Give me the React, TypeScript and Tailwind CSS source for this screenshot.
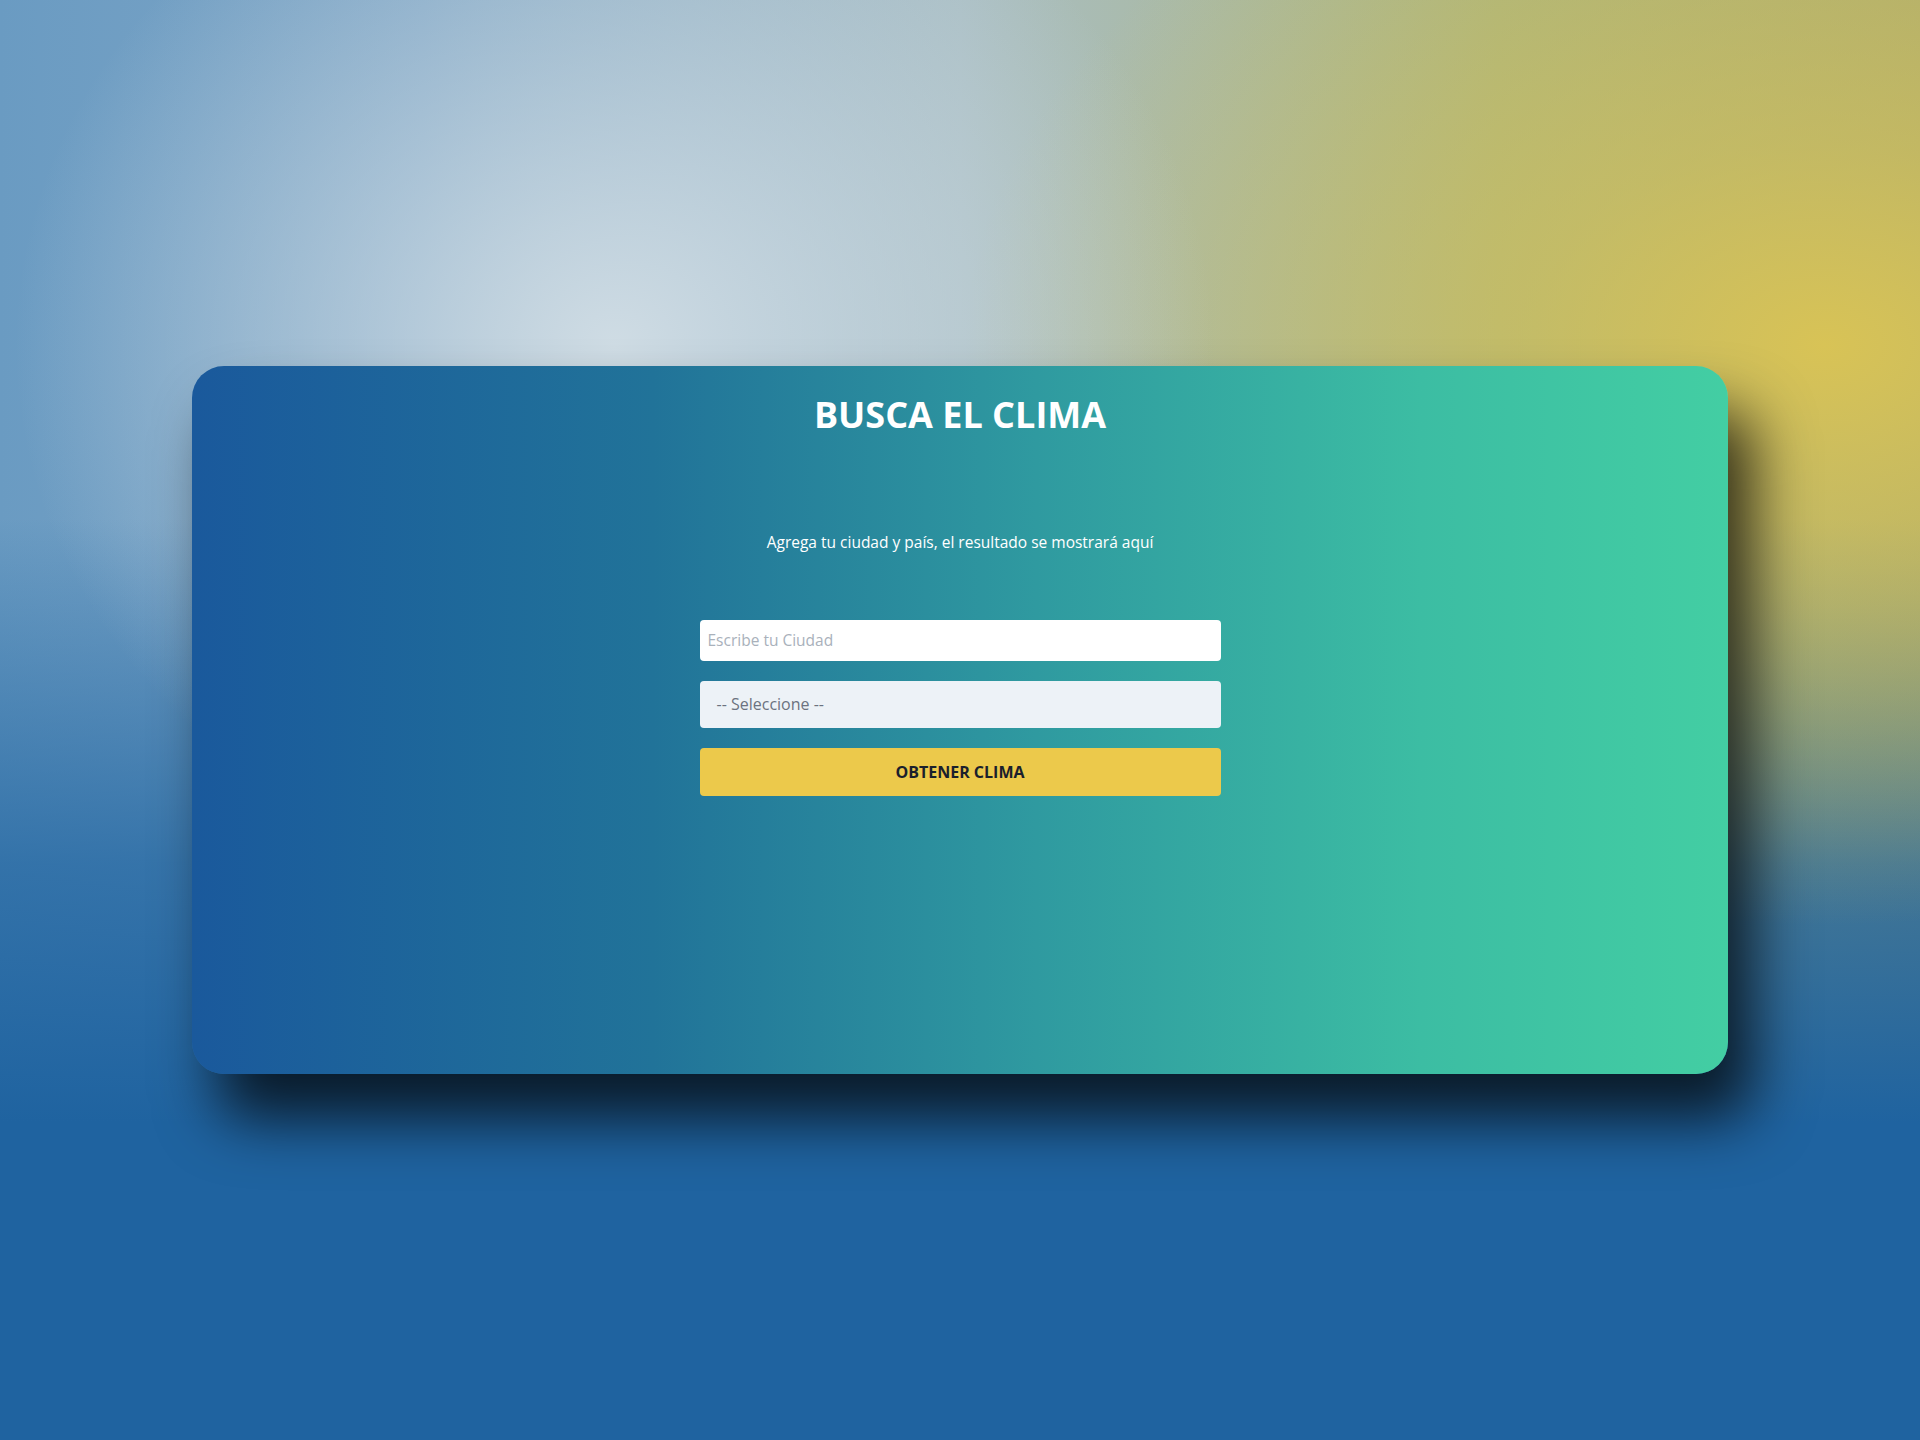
import React from "react";

export default function App() {
  return (
    <div
      className="w-[1920px] h-[1440px] flex items-center justify-center overflow-hidden bg-[radial-gradient(600px_540px_at_32%_24%,#cfdce4_0%,rgba(207,220,228,0.6)_40%,rgba(207,220,228,0)_100%),radial-gradient(860px_580px_at_95%_24%,#d8c356_0%,rgba(216,195,86,0.55)_35%,rgba(216,195,86,0)_100%),linear-gradient(180deg,rgba(31,99,160,0)_0%,rgba(31,99,160,0)_36%,rgba(33,101,161,0.75)_60%,#1f63a0_78%,#1f63a0_100%),linear-gradient(90deg,#6a9bc2_0%,#7fa6c6_22%,#a9bec4_50%,#aab47e_78%,#a9ab72_100%)]"
      style={{ fontFamily: '"Open Sans", "Noto Sans", sans-serif' }}
    >
      <div className="w-[1536px] h-[708px] rounded-[32px] bg-[linear-gradient(90deg,#1a599c_0%,#217399_30%,#2f9aa0_55%,#3cbda3_80%,#43cea3_100%)] shadow-[25px_45px_60px_rgba(0,0,0,0.75)] flex flex-col items-center pt-[31px]">
        <h1 className="text-[36px] leading-none font-bold text-white">BUSCA EL CLIMA</h1>
        <p className="mt-[102px] text-[15.5px] leading-none text-white">
          Agrega tu ciudad y país, el resultado se mostrará aquí
        </p>
        <form className="mt-[69px] w-[521px] flex flex-col gap-[20px]">
          <input
            type="text"
            placeholder="Escribe tu Ciudad"
            className="h-[41px] w-full rounded-[4px] bg-white px-[8px] text-[15.5px] text-gray-700 placeholder:text-[#a9b1bb] outline-none"
          />
          <div className="h-[47px] w-full rounded-[4px] bg-[#edf2f7] px-[17px] flex items-center text-[16px] text-[#6b7280]">
            -- Seleccione --
          </div>
          <button
            type="button"
            className="h-[48px] w-full rounded-[4px] bg-[#ecc94b] text-[16px] font-bold uppercase text-[#1a202c]"
          >
            Obtener Clima
          </button>
        </form>
      </div>
    </div>
  );
}
